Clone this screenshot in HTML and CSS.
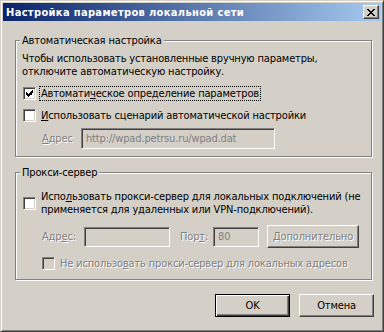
FILE: index.html
```html
<!DOCTYPE html>
<html lang="ru">
<head>
  <meta charset="UTF-8" />
  <title>Настройка параметров локальной сети</title>
  <link rel="stylesheet" href="styles.css">
</head>
<body>

  <div class="window">
    <div class="titlebar">
      <span class="title">Настройка параметров локальной сети</span>
      <button class="close" type="button">
        <svg width="8" height="7" viewBox="0 0 8 7" shape-rendering="crispEdges">
          <path d="M0 0h2v1h-2zM6 0h2v1h-2zM1 1h2v1h-2zM5 1h2v1h-2zM2 2h4v1h-4zM3 3h2v1h-2zM2 4h4v1h-4zM1 5h2v1h-2zM5 5h2v1h-2zM0 6h2v1h-2zM6 6h2v1h-2z"/>
        </svg>
      </button>
    </div>

    <div class="content">
      <fieldset class="group group-auto">
        <legend>Автоматическая настройка</legend>
        <p class="hint">Чтобы использовать установленные вручную параметры,<br>отключите автоматическую настройку.</p>

        <div class="check-row first">
          <span class="box">
            <svg width="7" height="7" viewBox="0 0 7 7" shape-rendering="crispEdges">
              <path d="M6 0h1v3h-1zM5 1h1v4h-1zM4 2h1v3h-1zM0 2h1v3h-1zM1 3h1v3h-1zM2 4h1v3h-1zM3 3h1v3h-1z"/>
            </svg>
          </span>
          <span class="label focus">Автомати<u>ч</u>еское определение параметров</span>
        </div>

        <div class="check-row">
          <span class="box"></span>
          <span class="label"><u>И</u>спользовать сценарий автоматической настройки</span>
        </div>

        <div class="field-row">
          <span class="dim addr-label"><u>А</u>дрес</span>
          <span class="field url">http://wpad.petrsu.ru/wpad.dat</span>
        </div>
      </fieldset>

      <fieldset class="group group-proxy">
        <legend>Прокси-сервер</legend>

        <div class="check-row multi">
          <span class="box"></span>
          <span class="label">Испо<u>л</u>ьзовать прокси-сервер для локальных подключений (не<br>применяется для удаленных или VPN-подключений).</span>
        </div>

        <div class="field-row proxy-row">
          <span class="dim proxy-label">Адр<u>е</u>с:</span>
          <span class="field host"></span>
          <span class="dim port-label">Пор<u>т</u>:</span>
          <span class="field port">80</span>
          <button class="btn btn-more" type="button" disabled><u>Д</u>ополнительно</button>
        </div>

        <div class="check-row sub">
          <span class="box disabled"></span>
          <span class="label dim">Не использо<u>в</u>ать прокси-сервер для локальных адресов</span>
        </div>
      </fieldset>

      <div class="actions">
        <button class="btn default" type="button">OK</button>
        <button class="btn" type="button">Отмена</button>
      </div>
    </div>
  </div>

</body>
</html>
```

FILE: styles.css
```css
body {
  margin: 0;
  background: #d4d0c8;
  font-family: "DejaVu Sans Condensed", "DejaVu Sans", sans-serif;
  font-stretch: semi-condensed;
  font-size: 11px;
  line-height: 13px;
  letter-spacing: -0.15px;
  color: #000;
}

.window {
  width: 384px;
  height: 332px;
  box-sizing: border-box;
  padding: 2px;
  background: #d4d0c8;
  border: 1px solid;
  border-color: #d4d0c8 #404040 #404040 #d4d0c8;
  box-shadow: inset 1px 1px #fff, inset -1px -1px #808080;
}

/* title bar */
.titlebar {
  display: flex;
  align-items: center;
  height: 18px;
  padding: 0 2px 0 3px;
  background: linear-gradient(to right, #0a246a, #a6caf0);
}

.title {
  color: #fff;
  font-weight: bold;
  letter-spacing: 0.35px;
}

.close {
  margin-left: auto;
  width: 16px;
  height: 14px;
  padding: 0;
  display: flex;
  align-items: center;
  justify-content: center;
  background: #d4d0c8;
  border: 1px solid;
  border-color: #fff #404040 #404040 #fff;
  box-shadow: inset -1px -1px #808080;
}

.content {
  padding: 0 9px 0 12px;
}

/* group boxes */
.group {
  width: 357px;
  box-sizing: border-box;
  margin: 13px 0 0;
  padding: 0 6px 7px;
  min-width: 0;
  border: 1px solid #808080;
  box-shadow: 1px 1px #fff, inset 1px 1px #fff;
}

.group legend {
  padding: 0 2px;
  margin-left: -2px;
  background: #d4d0c8;
}

.group-proxy {
  margin-top: 9px;
  padding-bottom: 8px;
}

.hint {
  margin: 5px 0 0;
}

/* checkboxes */
.check-row {
  display: flex;
  align-items: center;
  height: 15px;
  margin-top: 7px;
  padding-left: 1px;
}

.check-row.first {
  margin-top: 8px;
}

.check-row.multi {
  height: auto;
  margin-top: 10px;
}

.check-row.sub {
  margin-top: 8px;
  padding-left: 20px;
}

.box {
  width: 13px;
  height: 13px;
  box-sizing: border-box;
  flex: none;
  display: flex;
  align-items: center;
  justify-content: center;
  background: #fff;
  border: 1px solid;
  border-color: #808080 #fff #fff #808080;
  box-shadow: inset 1px 1px #404040, inset -1px -1px #d4d0c8;
}

.box.disabled {
  background: #d4d0c8;
}

.label {
  margin-left: 3px;
  padding: 0 1px;
  border: 1px solid transparent;
  white-space: nowrap;
}

.label.focus {
  border: 1px dotted #000;
}

.dim {
  color: #808080;
  text-shadow: 1px 1px 0 #fff;
}

/* text fields */
.field-row {
  display: flex;
  align-items: center;
  margin-top: 5px;
  padding-left: 20px;
}

.field {
  height: 21px;
  box-sizing: border-box;
  display: flex;
  align-items: center;
  padding: 0 4px;
  color: #808080;
  background: #d4d0c8;
  border: 1px solid;
  border-color: #808080 #fff #fff #808080;
  box-shadow: inset 1px 1px #404040, inset -1px -1px #d4d0c8;
}

.addr-label {
  width: 39px;
}

.url {
  width: 194px;
}

.proxy-row {
  margin-top: 8px;
}

.proxy-label {
  width: 42px;
}

.host {
  width: 86px;
  height: 20px;
}

.port-label {
  margin-left: 10px;
  width: 33px;
}

.port {
  width: 46px;
  height: 20px;
}

/* buttons */
.btn {
  width: 75px;
  height: 23px;
  padding: 0;
  font: inherit;
  letter-spacing: inherit;
  color: #000;
  background: #d4d0c8;
  border: 1px solid;
  border-color: #fff #404040 #404040 #fff;
  box-shadow: inset -1px -1px #808080;
}

.btn.default {
  border-color: #000;
  box-shadow: inset 1px 1px #fff, inset -1px -1px #404040, inset -2px -2px #808080;
}

.btn-more {
  width: 92px;
  margin-left: 8px;
  color: #808080;
  text-shadow: 1px 1px 0 #fff;
}

.actions {
  display: flex;
  justify-content: flex-end;
  gap: 9px;
  margin: 14px -2px 0 0;
}
```
